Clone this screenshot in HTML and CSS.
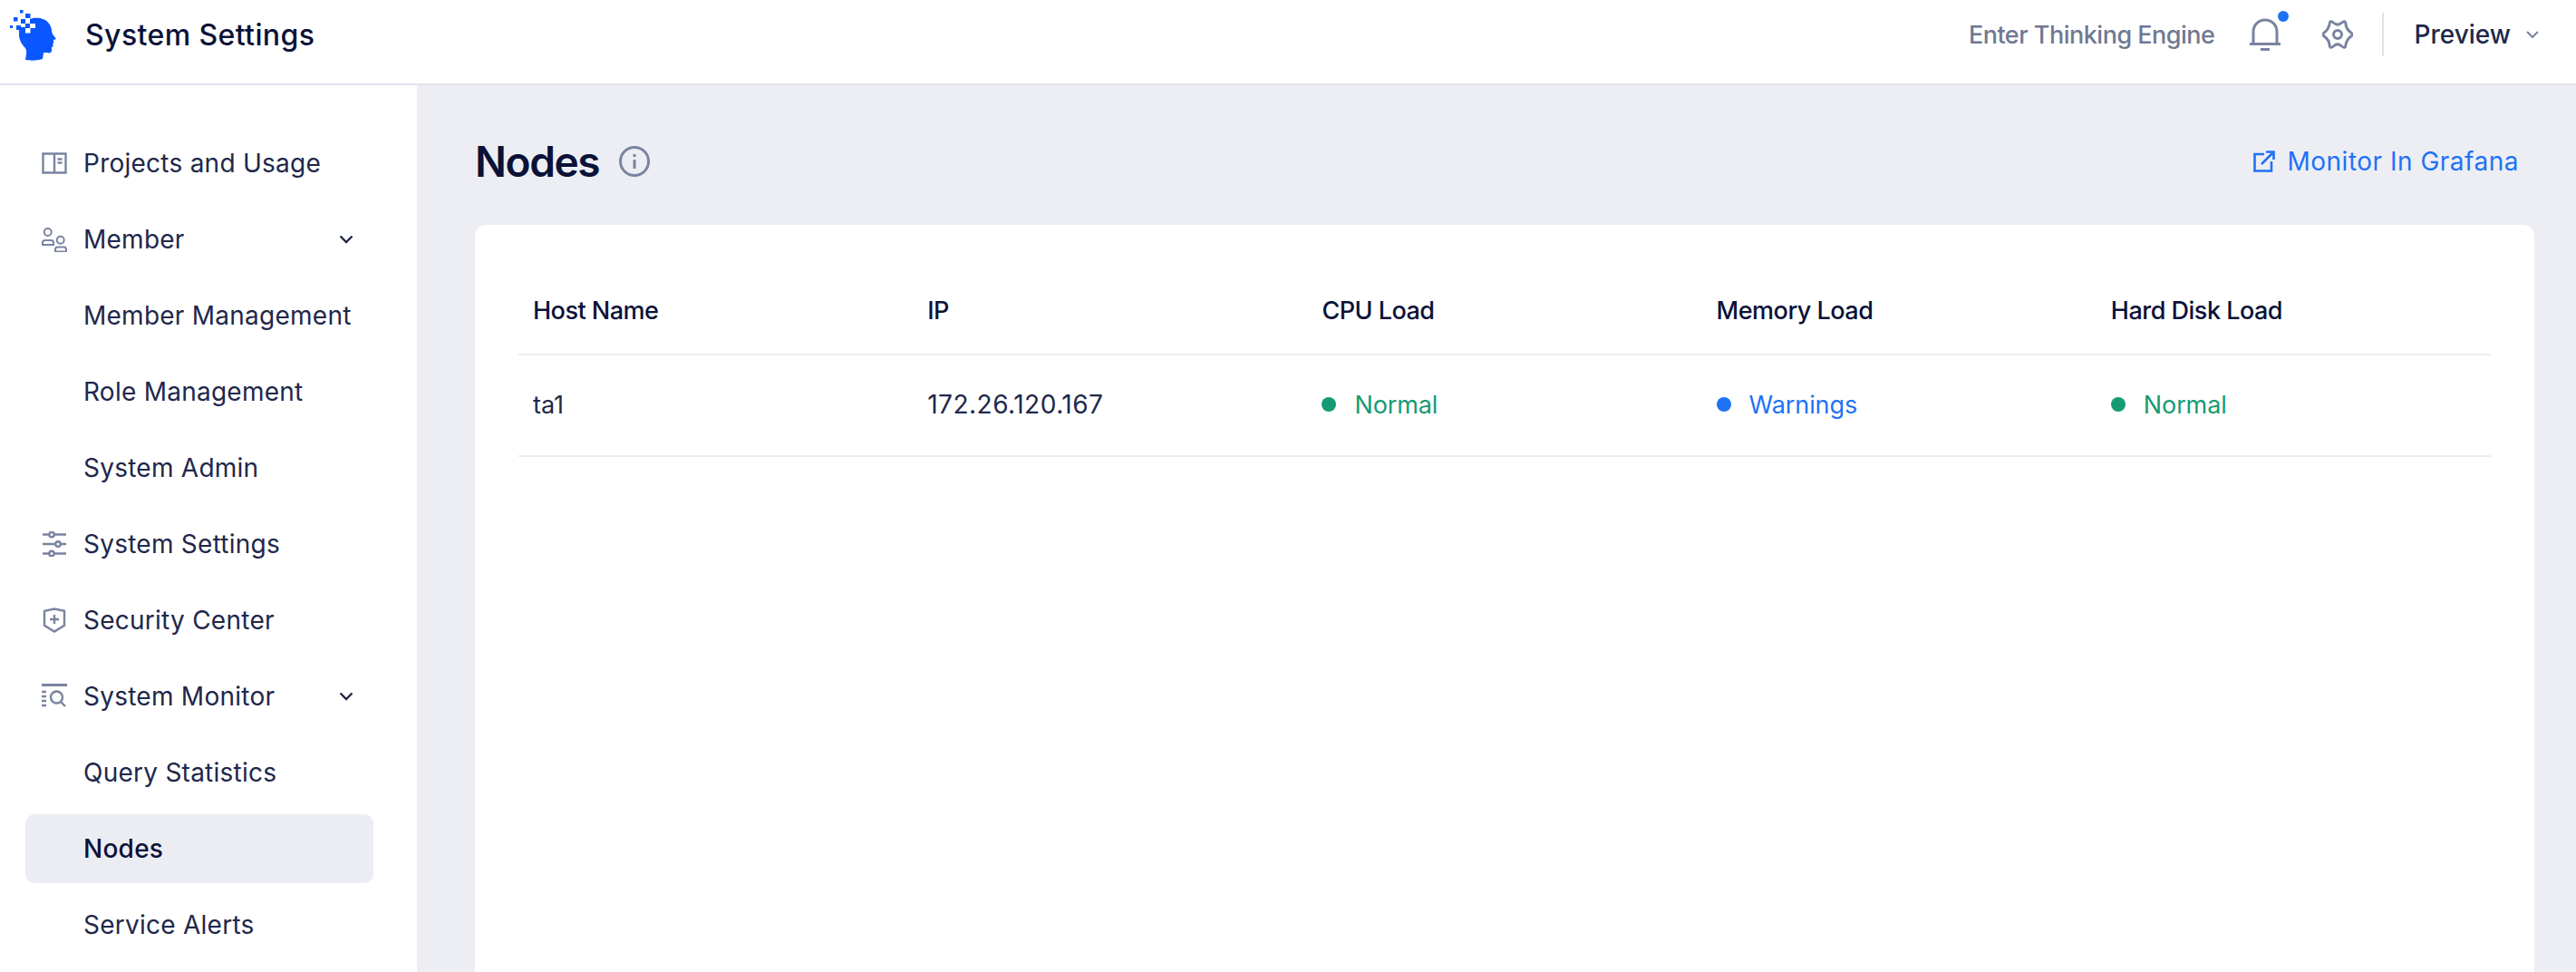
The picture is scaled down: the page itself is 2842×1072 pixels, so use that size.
FILE: index.html
```html
<!DOCTYPE html>
<html lang="en">
<head>
<meta charset="utf-8">
<title>Nodes</title>
<link rel="stylesheet" href="styles.css">
</head>
<body>
<header class="topbar">
  <svg class="logo" viewBox="0 0 70 70" width="70" height="70">
    <path fill="#0a57ff" d="M21 30h7v-8h5v-1c3-1 9-2 14 0 5 1 9 6 10 12 0 3 1 5 2 6l3 4-3 1 0 4-1 1 1 2-2 1 0 4c0 2-3 3-5 2l-4 0-1 7c-6 2-14 2-19 1 1-6 2-9 0-13-4-4-7-9-7-15l0-8z"/>
    <rect fill="#fff" x="28" y="21" width="5" height="5"/>
    <rect fill="#fff" x="28" y="31" width="5.500" height="5.500"/>
    <rect fill="#fff" x="33" y="26" width="6" height="5"/>
    <rect fill="#0a57ff" x="22" y="11" width="3.500" height="3.500"/>
    <rect fill="#0a57ff" x="28" y="15" width="5.500" height="5"/>
    <rect fill="#0a57ff" x="15" y="19" width="4.500" height="4.500"/>
    <rect fill="#0a57ff" x="23" y="21" width="5" height="5"/>
    <rect fill="#0a57ff" x="28" y="26" width="5" height="5"/>
    <rect fill="#0a57ff" x="11" y="28" width="3" height="3"/>
    <rect fill="#0a57ff" x="18" y="28" width="5" height="5"/>
  </svg>
  <div class="brand">System Settings</div>
  <div class="top-right">
    <span class="engine">Enter Thinking Engine</span>
    <span class="bell">
      <svg viewBox="0 0 34 36" width="34" height="36" fill="none" stroke="#7a84a0" stroke-width="3">
        <path d="M0 28.500h34M4 28.500V15C4 7.500 10 2 17 2s13 5.500 13 13v13.500"/>
        <path d="M12 34.500h10"/>
      </svg>
      <i class="bell-dot"></i>
    </span>
    <svg class="gear" viewBox="0 0 34 32" width="34" height="32" fill="none" stroke="#7a84a0" stroke-width="3">
      <path d="M21.250 3.250Q25.500-.500 26 4.750T31.250 13.500Q35 16 31.250 18.500T26 27.250Q25.500 32.500 21.250 28.750T12.750 28.750Q8.500 32.500 8 27.250T2.750 18.500Q-1 16 2.750 13.500T8 4.750Q8.500-.500 12.750 3.250T21.250 3.250Z"/>
      <circle cx="17" cy="16" r="4.500"/>
    </svg>
    <i class="divider"></i>
    <span class="preview">Preview</span>
    <svg class="caret" viewBox="0 0 14 8" width="14" height="8" fill="none" stroke="#7a84a0" stroke-width="2"><path d="M1 1l6 6 6-6"/></svg>
  </div>
</header>
<div class="shell">
  <nav class="side">
    <a class="item">
      <svg class="ico" viewBox="0 0 28 28" fill="none" stroke="#7a84a0" stroke-width="2.400"><path d="M1.500 3.500h25v21h-25zM14 3.500v21"/><path d="M17.500 9.500h5M17.500 13.500h5"/></svg>
      <span>Projects and Usage</span>
    </a>
    <a class="item">
      <svg class="ico" viewBox="0 -3 28 28" fill="none" stroke="#7a84a0" stroke-width="2"><circle cx="6.700" cy="3" r="4"/><path d="M1 17v-2.500c0-1.500 1-2.500 2.500-2.500h7c1.500 0 2.500 1 2.500 2.500V17z"/><circle cx="20.700" cy="11.700" r="4"/><path d="M15 24.500v-2.500c0-1.500 1-2.500 2.500-2.500h7c1.500 0 2.500 1 2.500 2.500v2.500z"/></svg>
      <span>Member</span>
      <svg class="chev" viewBox="0 0 16 10" width="16" height="10" fill="none" stroke="#21274a" stroke-width="2.400"><path d="M1.500 1.500L8 8l6.500-6.500"/></svg>
    </a>
    <a class="item"><i class="ico"></i><span>Member Management</span></a>
    <a class="item"><i class="ico"></i><span>Role Management</span></a>
    <a class="item"><i class="ico"></i><span>System Admin</span></a>
    <a class="item">
      <svg class="ico" viewBox="0 0 28 28" fill="none" stroke="#7a84a0" stroke-width="2.400"><path d="M1 3.500h7M14 3.500h13M1 14h14M21 14h6M1 24.500h7M14 24.500h13"/><circle cx="11" cy="3.500" r="2.700"/><circle cx="18" cy="14" r="2.700"/><circle cx="11" cy="24.500" r="2.700"/></svg>
      <span>System Settings</span>
    </a>
    <a class="item">
      <svg class="ico" viewBox="0 0 28 28" fill="none" stroke="#7a84a0" stroke-width="2.400"><path d="M3 3.800L14 1.500l11 2.300v16L14 26.500 3 19.800z"/><path d="M14 8v10M9 13h10"/></svg>
      <span>Security Center</span>
    </a>
    <a class="item">
      <svg class="ico" viewBox="0 0 28 28" fill="none" stroke="#7a84a0" stroke-width="2.400"><path d="M0 1.500h28" stroke-width="3"/><path d="M0 9h5M0 14h5M0 19h5M0 24h5" stroke-width="2.600"/><circle cx="16.500" cy="15" r="6.500"/><path d="M21 20l5 5"/></svg>
      <span>System Monitor</span>
      <svg class="chev" viewBox="0 0 16 10" width="16" height="10" fill="none" stroke="#21274a" stroke-width="2.400"><path d="M1.500 1.500L8 8l6.500-6.500"/></svg>
    </a>
    <a class="item"><i class="ico"></i><span>Query Statistics</span></a>
    <a class="item active"><i class="ico"></i><span>Nodes</span></a>
    <a class="item"><i class="ico"></i><span>Service Alerts</span></a>
  </nav>
  <main class="main">
    <div class="page-head">
      <div class="title-wrap">
        <h1>Nodes</h1>
        <svg class="info" viewBox="0 0 34 34" width="34" height="34" fill="none" stroke="#7a84a0"><circle cx="17" cy="17" r="15.500" stroke-width="3"/><path d="M17 15v10" stroke-width="3"/><path d="M17 9v3" stroke-width="3"/></svg>
      </div>
      <a class="grafana">
        <svg viewBox="0 0 24 24" width="24" height="24" fill="none" stroke="#1f72f5" stroke-width="2.600"><path d="M12 4H1.500v18.500H20V12"/><path d="M9 15L22 2M14 1.500h8.500V10"/></svg>
        <span>Monitor In Grafana</span>
      </a>
    </div>
    <section class="card">
      <div class="row head">
        <div>Host Name</div><div>IP</div><div>CPU Load</div><div>Memory Load</div><div>Hard Disk Load</div>
      </div>
      <div class="row body">
        <div>ta1</div>
        <div class="num">172.26.120.167</div>
        <div class="status ok"><i></i>Normal</div>
        <div class="status warn"><i></i>Warnings</div>
        <div class="status ok"><i></i>Normal</div>
      </div>
    </section>
  </main>
</div>
</body>
</html>
```

FILE: styles.css
```css
* { box-sizing: border-box; }
html, body { margin: 0; height: 100%; overflow: hidden; }
body { font-family: Inter, "Noto Sans", sans-serif; font-size: 28px; color: #21274a; background: #fff; display: flex; flex-direction: column; }
.topbar { height: 94px; flex: none; display: flex; align-items: center; border-bottom: 2px solid #e2e5ec; }
.logo { flex: none; margin-right: 24px; align-self: flex-start; }
.brand { font-size: 32px; font-weight: 500; letter-spacing: .4px; color: #0b1238; margin-top: -16px; }
.top-right { margin-left: auto; display: flex; align-items: center; height: 48px; margin-top: -16px; padding-right: 41px; }
.engine { color: #6f7893; font-weight: 500; font-size: 27px; letter-spacing: -.5px; margin-right: 39px; }
.bell { position: relative; display: flex; margin-right: 46px; }
.bell-dot { position: absolute; left: 31px; top: -8px; width: 12px; height: 12px; border-radius: 50%; background: #1f72f5; }
.divider { width: 2px; height: 48px; background: #dfe2ea; margin: 0 33px 0 32px; }
.preview { font-weight: 500; color: #21274a; margin-right: 17px; }
.shell { display: flex; flex: 1; min-height: 0; }
.side { width: 460px; flex: none; padding: 48px 48px 0 28px; display: flex; flex-direction: column; gap: 8px; letter-spacing: .25px; }
.item { height: 76px; flex: none; display: flex; align-items: center; gap: 18px; padding: 0 22px 0 18px; border-radius: 10px; }
.ico { width: 28px; height: 28px; flex: none; display: block; }
.chev { margin-left: auto; }
.active { background: #ecedf3; color: #0b1238; font-weight: 500; }
.main { flex: 1; background: #edeef4; padding: 0 46px 0 64px; display: flex; flex-direction: column; min-height: 0; }
.page-head { height: 154px; flex: none; padding-top: 14px; display: flex; align-items: center; justify-content: space-between; }
.title-wrap { display: flex; align-items: center; gap: 22px; }
h1 { margin: 0; font-size: 46px; font-weight: 600; letter-spacing: -1.4px; color: #0b1238; }
.grafana { display: flex; align-items: center; gap: 13px; color: #1f72f5; letter-spacing: .5px; margin-right: 17px; }
.card { background: #fff; border-radius: 12px 12px 0 0; flex: 1; padding: 48px 48px 0 48px; }
.row { display: grid; grid-template-columns: repeat(5, 1fr); border-bottom: 2px solid #ecedf3; align-items: center; }
.row > div { padding: 0 0 2px 16px; }
.row.head { height: 96px; font-size: 27px; font-weight: 500; letter-spacing: -.5px; color: #0b1238; }
.row.body { height: 112px; font-size: 27px; }
.row.body > .num { font-size: 28px; letter-spacing: .5px; }
.status { display: flex; align-items: center; gap: 20px; letter-spacing: -.1px; }
.status i { width: 16px; height: 16px; border-radius: 50%; }
.ok { color: #159b73; }
.ok i { background: #159b73; }
.warn { color: #1f72f5; }
.warn i { background: #1f72f5; }
```
